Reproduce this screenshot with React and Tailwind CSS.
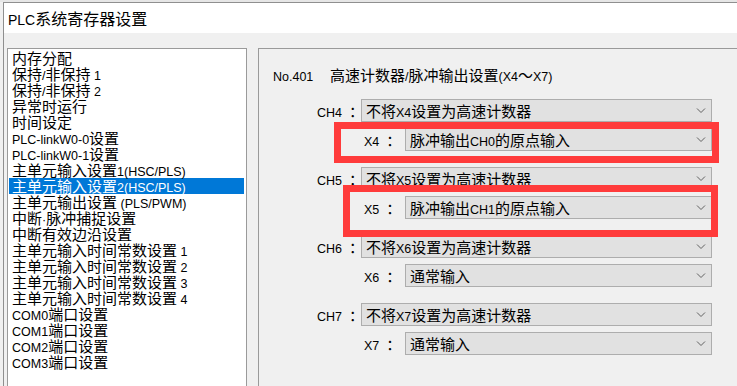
import React from "react";

const CJK_RE = /([\u3000-\u303f\u3400-\u9fff\uff00-\uffef]+)/;

function Mixed({ text, cjk = "font-['Noto_Sans_CJK_SC'] text-[15px]", lat = "font-['Liberation_Sans'] text-[12.5px]" }) {
  const parts = text.split(CJK_RE).filter(Boolean);
  return (
    <span className="whitespace-pre">
      {parts.map((p, i) =>
        /[\u3000-\u303f\u3400-\u9fff\uff00-\uffef]/.test(p) ? (
          <span key={i} className={cjk}>{p}</span>
        ) : (
          <span key={i} className={lat}>{p}</span>
        )
      )}
    </span>
  );
}

const items = [
  "内存分配",
  "保持/非保持 1",
  "保持/非保持 2",
  "异常时运行",
  "时间设定",
  "PLC-linkW0-0设置",
  "PLC-linkW0-1设置",
  "主单元输入设置1(HSC/PLS)",
  "主单元输入设置2(HSC/PLS)",
  "主单元输出设置 (PLS/PWM)",
  "中断·脉冲捕捉设置",
  "中断有效边沿设置",
  "主单元输入时间常数设置 1",
  "主单元输入时间常数设置 2",
  "主单元输入时间常数设置 3",
  "主单元输入时间常数设置 4",
  "COM0端口设置",
  "COM1端口设置",
  "COM2端口设置",
  "COM3端口设置",
];

function Chevron() {
  return (
    <svg width="10" height="6" viewBox="0 0 10 6" className="shrink-0">
      <path d="M1 0.5 L5 4.5 L9 0.5" fill="none" stroke="#606060" strokeWidth="1" />
    </svg>
  );
}

function Select({ text, wide }) {
  return (
    <div
      className={
        (wide ? "w-[351px]" : "w-[307px]") +
        " h-[23px] bg-[#e1e1e1] border border-[#adadad] flex items-center justify-between pl-[4px] pr-[5px] text-black"
      }
    >
      <div className="h-[18px] leading-[18px] overflow-visible">
        <Mixed text={text} />
      </div>
      <Chevron />
    </div>
  );
}

function ChRow({ label, text }) {
  return (
    <div className="flex items-center">
      <div className="w-[88px] pl-[44px] h-[18px] leading-[18px] text-black">
        <Mixed text={label} />
      </div>
      <Select text={text} wide />
    </div>
  );
}

function XRow({ label, text }) {
  return (
    <div className="flex items-center">
      <div className="w-[132px] pl-[91px] h-[18px] leading-[18px] text-black">
        <Mixed text={label} />
      </div>
      <Select text={text} />
    </div>
  );
}

function Group({ n, x }) {
  return (
    <div className="flex flex-col gap-[6px]">
      <ChRow label={`CH${n}  ：`} text={`不将X${n}设置为高速计数器`} />
      <XRow label={`X${n}  ：`} text={x} />
    </div>
  );
}

export default function App() {
  return (
    <div className="w-[737px] h-[386px] overflow-hidden bg-[#f0f0f0] relative">
      <div className="h-[2px] bg-[#e6e6e6]" />
      <div className="ml-[3px] border-l border-t border-[#8f8f8f] h-[420px]">
        <div className="h-[30px] bg-white pl-[4px] pt-[4px] leading-[22px] text-black">
          <Mixed
            text="PLC系统寄存器设置"
            cjk="font-['Noto_Sans_CJK_SC'] text-[16px]"
            lat="font-['Liberation_Sans'] text-[14px]"
          />
        </div>
        <div className="flex pt-[15px] pl-[3px] gap-[11px]">
          <div className="w-[240px] h-[360px] shrink-0 border border-[#9a9a9a] bg-white pt-[1px] pl-px pr-px overflow-hidden">
            {items.map((it, i) => (
              <div
                key={i}
                className={
                  "h-[16px] leading-[16px] pl-[3px] mr-[1px] overflow-visible " +
                  (i === 8 ? "bg-[#0078d7] text-white" : "text-black")
                }
              >
                <Mixed text={it} />
              </div>
            ))}
          </div>
          <div className="flex-1 h-[360px] border-l border-t border-[#9a9a9a] pl-[14px] pt-[17px]">
            <div className="h-[18px] leading-[18px] text-black">
              <span className="font-['Liberation_Sans'] text-[12.5px] inline-block w-[57px]">No.401</span>
              <Mixed text="高速计数器/脉冲输出设置(X4～X7)" />
            </div>
            <div className="flex flex-col gap-[16px] mt-[15px]">
              <Group n={4} x="脉冲输出CH0的原点输入" />
              <Group n={5} x="脉冲输出CH1的原点输入" />
              <Group n={6} x="通常输入" />
              <Group n={7} x="通常输入" />
            </div>
          </div>
        </div>
      </div>
      <div className="absolute left-[334px] top-[122px] w-[385px] h-[41px] border-[7px] border-[#ff3b3b] pointer-events-none" />
      <div className="absolute left-[343px] top-[185px] w-[375px] h-[52px] border-[7px] border-[#ff3b3b] pointer-events-none" />
    </div>
  );
}
